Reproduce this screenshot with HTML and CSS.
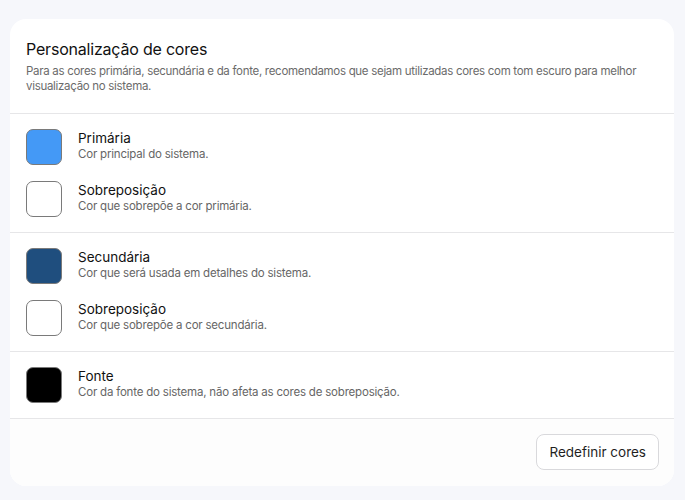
FILE: index.html
```html
<!DOCTYPE html>
<html lang="pt-BR">
<head>
  <meta charset="UTF-8" />
  <meta name="viewport" content="width=device-width, initial-scale=1.0" />
  <title>Personalização de cores</title>
  <link rel="stylesheet" href="styles.css">
</head>
<body>
  <div class="card">
    <div class="card-header">
      <h1>Personalização de cores</h1>
      <p>Para as cores primária, secundária e da fonte, recomendamos que sejam utilizadas cores com tom escuro para melhor visualização no sistema.</p>
    </div>

    <div class="group">
      <div class="color-row">
        <div class="swatch primary"></div>
        <div class="info">
          <div class="name">Primária</div>
          <div class="desc">Cor principal do sistema.</div>
        </div>
      </div>
      <div class="color-row">
        <div class="swatch white"></div>
        <div class="info">
          <div class="name">Sobreposição</div>
          <div class="desc">Cor que sobrepõe a cor primária.</div>
        </div>
      </div>
    </div>

    <div class="group">
      <div class="color-row">
        <div class="swatch secondary"></div>
        <div class="info">
          <div class="name">Secundária</div>
          <div class="desc">Cor que será usada em detalhes do sistema.</div>
        </div>
      </div>
      <div class="color-row">
        <div class="swatch white"></div>
        <div class="info">
          <div class="name">Sobreposição</div>
          <div class="desc">Cor que sobrepõe a cor secundária.</div>
        </div>
      </div>
    </div>

    <div class="group">
      <div class="color-row">
        <div class="swatch font"></div>
        <div class="info">
          <div class="name">Fonte</div>
          <div class="desc">Cor da fonte do sistema, não afeta as cores de sobreposição.</div>
        </div>
      </div>
    </div>

    <div class="card-footer">
      <button class="reset-btn">Redefinir cores</button>
    </div>
  </div>
</body>
</html>
```

FILE: styles.css
```css
body {
  margin: 0;
  padding: 19px 11px 14px 10px;
  background-color: #f6f7fb;
  font-family: Inter, 'Noto Sans', sans-serif;
  color: #1f1f1f;
}

.card {
  background-color: #ffffff;
  border-radius: 16px;
  overflow: hidden;
}

.card-header {
  padding: 19px 16px 19px;
  border-bottom: 1px solid #e6e6e8;
}

.card-header h1 {
  margin: 0 0 4px;
  font-size: 16px;
  font-weight: 400;
  line-height: 22px;
  letter-spacing: -0.2px;
  color: #111111;
}

.card-header p {
  margin: 0;
  font-size: 11.5px;
  line-height: 15px;
  color: #6b6b6b;
  letter-spacing: -0.3px;
}

.group {
  padding: 15px 16px 15px;
  display: flex;
  flex-direction: column;
  gap: 16px;
  border-bottom: 1px solid #e6e6e8;
}

.color-row {
  display: flex;
  align-items: center;
  gap: 16px;
}

.swatch {
  width: 34px;
  height: 34px;
  border: 1px solid #7a7a7a;
  border-radius: 7px;
  flex-shrink: 0;
}

.swatch.primary { background-color: #4499f6; }
.swatch.white { background-color: #ffffff; }
.swatch.secondary { background-color: #1f4e7e; }
.swatch.font { background-color: #000000; }

.info {
  padding-bottom: 2px;
}

.info .name {
  font-size: 13.5px;
  line-height: 17px;
  font-weight: 400;
  color: #111111;
}

.info .desc {
  font-size: 11.5px;
  line-height: 15px;
  color: #666666;
  letter-spacing: -0.2px;
}

.card-footer {
  background-color: #fdfdfd;
  padding: 15px 15px 16px;
  display: flex;
  justify-content: flex-end;
}

.reset-btn {
  background-color: #ffffff;
  border: 1px solid #d9d9dc;
  border-radius: 8px;
  padding: 0 12px;
  height: 36px;
  white-space: nowrap;
  font-family: Inter, 'Noto Sans', sans-serif;
  font-size: 13.5px;
  color: #1f1f1f;
  cursor: pointer;
}
```
